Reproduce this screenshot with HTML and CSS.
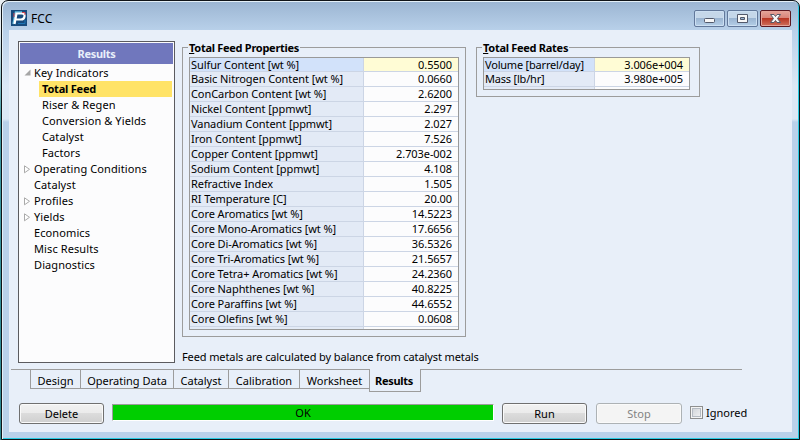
FILE: index.html
```html
<!DOCTYPE html>
<html lang="en">
<head>
<meta charset="utf-8">
<title>FCC</title>
<link rel="stylesheet" href="styles.css">
</head>
<body>
<div class="window">
  <header class="titlebar">
    <svg class="logo" width="16" height="16" viewBox="0 0 16 16">
      <rect width="16" height="16" fill="#164a7c"/>
      <path d="M2 14 4.500 2H11" fill="none" stroke="#65bde0" stroke-width="1.500"/>
      <path d="M3.500 14 5.500 3.500H11Q14 3.500 13.500 6.500T10 9.500H5" fill="none" stroke="#fff" stroke-width="2.200"/>
      <path d="M3 3V7" stroke="#d74750"/><path d="M11 2.500H14V5" fill="none" stroke="#d74750"/>
      <path d="M7 13.500H14V10" fill="none" stroke="#1d75b4"/>
    </svg>
    <span class="title">FCC</span>
    <div class="controls">
      <span class="control"><svg width="29" height="15" viewBox="0 0 29 15"><rect x="9.500" y="7.500" width="10" height="4" rx="1" fill="#f7f7f7" stroke="#52596b"/></svg></span>
      <span class="control"><svg width="29" height="15" viewBox="0 0 29 15"><path d="M9.500 3.500h10v8h-10zM12.500 6.500v2h4v-2z" fill="#f7f7f7" fill-rule="evenodd" stroke="#52596b"/></svg></span>
      <span class="control close"><svg width="29" height="15" viewBox="0 0 29 15"><path d="M9.500 3.500h3.500l1.500 2 1.500-2h3.500l-3 4 3 4h-3.500l-1.500-2-1.500 2H9.500l3-4z" fill="#f7f7f7" stroke="#565a68"/></svg></span>
    </div>
  </header>
  <main class="client">
    <div class="content">
      <nav class="sidebar">
        <h2 class="side-title">Results</h2>
        <ul class="tree">
          <li><svg class="arrow" width="7" height="7" viewBox="0 0 7 7"><path d="M6.500 .5v6h-6z" fill="#a6a6a6"/></svg>Key Indicators</li>
          <li class="child selected">Total Feed</li>
          <li class="child">Riser &amp; Regen</li>
          <li class="child">Conversion &amp; Yields</li>
          <li class="child">Catalyst</li>
          <li class="child">Factors</li>
          <li><svg class="arrow" width="7" height="9" viewBox="0 0 7 9"><path d="M.5.8v7l5-3.500z" fill="#fff" stroke="#aaa"/></svg>Operating Conditions</li>
          <li>Catalyst</li>
          <li><svg class="arrow" width="7" height="9" viewBox="0 0 7 9"><path d="M.5.8v7l5-3.500z" fill="#fff" stroke="#aaa"/></svg>Profiles</li>
          <li><svg class="arrow" width="7" height="9" viewBox="0 0 7 9"><path d="M.5.8v7l5-3.500z" fill="#fff" stroke="#aaa"/></svg>Yields</li>
          <li>Economics</li>
          <li>Misc Results</li>
          <li>Diagnostics</li>
        </ul>
      </nav>
      <div class="panel">
        <div class="groups">
          <section class="group properties">
            <h3 class="legend"><u>T</u>otal Feed Properties</h3>
            <div class="grid">
              <div class="row active"><span>Sulfur Content [wt %]</span><b>0.5500</b></div>
              <div class="row"><span>Basic Nitrogen Content [wt %]</span><b>0.0660</b></div>
              <div class="row"><span>ConCarbon Content [wt %]</span><b>2.6200</b></div>
              <div class="row"><span>Nickel Content [ppmwt]</span><b>2.297</b></div>
              <div class="row"><span>Vanadium Content [ppmwt]</span><b>2.027</b></div>
              <div class="row"><span>Iron Content [ppmwt]</span><b>7.526</b></div>
              <div class="row"><span>Copper Content [ppmwt]</span><b>2.703e-002</b></div>
              <div class="row"><span>Sodium Content [ppmwt]</span><b>4.108</b></div>
              <div class="row"><span>Refractive Index</span><b>1.505</b></div>
              <div class="row"><span>RI Temperature [C]</span><b>20.00</b></div>
              <div class="row"><span>Core Aromatics [wt %]</span><b>14.5223</b></div>
              <div class="row"><span>Core Mono-Aromatics [wt %]</span><b>17.6656</b></div>
              <div class="row"><span>Core Di-Aromatics [wt %]</span><b>36.5326</b></div>
              <div class="row"><span>Core Tri-Aromatics [wt %]</span><b>21.5657</b></div>
              <div class="row"><span>Core Tetra+ Aromatics [wt %]</span><b>24.2360</b></div>
              <div class="row"><span>Core Naphthenes [wt %]</span><b>40.8225</b></div>
              <div class="row"><span>Core Paraffins [wt %]</span><b>44.6552</b></div>
              <div class="row"><span>Core Olefins [wt %]</span><b>0.0608</b></div>
              <div class="row rest"><span></span><b></b></div>
            </div>
          </section>
          <section class="group rates">
            <h3 class="legend"><u>T</u>otal Feed Rates</h3>
            <div class="grid">
              <div class="row active"><span>Volume [barrel/day]</span><b>3.006e+004</b></div>
              <div class="row"><span>Mass [lb/hr]</span><b>3.980e+005</b></div>
              <div class="row rest"><span></span><b></b></div>
            </div>
          </section>
        </div>
        <p class="note">Feed metals are calculated by balance from catalyst metals</p>
      </div>
    </div>
    <div class="tabs">
      <span class="lead"></span>
      <span class="tab design">Design</span>
      <span class="tab operating">Operating Data</span>
      <span class="tab catalyst">Catalyst</span>
      <span class="tab calibration">Calibration</span>
      <span class="tab worksheet">Worksheet</span>
      <span class="tab current">Results</span>
      <span class="trail"></span>
    </div>
    <footer class="actions">
      <button class="button delete">Delete</button>
      <div class="status">OK</div>
      <button class="button run">Run</button>
      <button class="button stop" disabled>Stop</button>
      <span class="check"></span>
      <span class="check-label">Ignored</span>
    </footer>
  </main>
</div>
</body>
</html>
```
FILE: styles.css
```css
* { box-sizing: border-box; }
body {
  margin: 0;
  width: 800px;
  height: 440px;
  overflow: hidden;
  background: linear-gradient(#e8eef2 0 30px, #3d9aa3 120px, #2b8790);
  font: 11px/16px "Noto Sans", "Open Sans", sans-serif;
  letter-spacing: 0.1px;
  color: #000;
}
h2, h3, p, ul { margin: 0; padding: 0; font-size: inherit; }
.window {
  width: 799px;
  height: 440px;
  margin-left: 1px;
  padding: 0 7px 7px 6px;
  border: 1px solid #101418;
  border-radius: 7px 7px 0 0;
  background: linear-gradient(#9bb5d2, #b9d1ea 30px, #dce8f5 85px, #dce8f5 118px, #b9d1ea 121px);
  box-shadow: inset 1px 1px #e4f0f8, inset -1px -1px #28cbe3;
}
.titlebar {
  display: flex;
  align-items: flex-start;
  height: 29px;
  padding: 9px 1px 0 3px;
}
.logo { display: block; }
.title { margin: 1px auto 0 4px; font-size: 12px; line-height: 16px; letter-spacing: 0.1px; }
.controls { display: flex; gap: 2px; }
.control {
  width: 31px;
  height: 17px;
  border: 1px solid #62789a;
  border-radius: 2px;
  background: linear-gradient(#c5d7e9 0 48%, #9bb5d2 50%, #b5cfe7);
  box-shadow: inset 0 0 0 1px #ccdff2;
}
.control svg { display: block; }
.close {
  border-color: #5b1720;
  background: linear-gradient(#e5a49a 0, #d98378 47%, #b93624 50%, #cf705d);
  box-shadow: inset 0 0 0 1px #e4a399;
}
.client {
  height: 402px;
  margin-left: 1px;
  padding-top: 11px;
  background: #e8eff9;
}
.content { display: flex; height: 328px; padding-left: 9px; }
.sidebar {
  width: 157px;
  height: 322px;
  padding: 1px 0;
  border: 1px solid #5b5b5f;
  background: #fcfcfd;
}
.side-title {
  height: 21px;
  margin: 0 1px 0 1px;
  background: #7077bd;
  color: #e8effa;
  letter-spacing: -0.3px;
  line-height: 22px;
  text-align: center;
}
.tree { padding-top: 1px; list-style: none; }
.tree li { position: relative; height: 16px; padding-left: 15px; white-space: nowrap; }
.arrow { position: absolute; left: 5px; top: 4px; }
.tree .child { margin: 0 2px 0 20px; padding-left: 3px; }
.selected { background: #ffe367; font-weight: bold; letter-spacing: -0.2px; }
.panel { margin-left: 7px; }
.groups { display: flex; align-items: flex-start; gap: 10px; padding-top: 6px; }
.group { padding: 0 6px 6px; border: 1px solid #9c9c9c; }
.properties { width: 284px; height: 290px; }
.rates { width: 224px; height: 50px; padding-right: 9px; }
.legend {
  width: max-content;
  height: 16px;
  margin: -8px 0 1px -1px;
  padding: 0 1px;
  background: #e8eff9;
  letter-spacing: -0.28px;
}
.grid { overflow: hidden; border: 1px solid #999; letter-spacing: -0.08px; }
.properties .grid { height: 273px; }
.rates .grid { height: 33px; }
.row { display: flex; height: 15px; line-height: 14px; }
.row span {
  width: 174px;
  padding-left: 1px;
  border-right: 1px solid #ccd5e5;
  border-bottom: 1px solid #ccd5e5;
  background: #e3eaf6;
  white-space: nowrap;
}
.row b {
  flex: 1;
  padding-right: 6px;
  border-bottom: 1px solid #ccd5e5;
  background: #fcfcfd;
  font-weight: normal;
  text-align: right;
}
.rates .row span { width: 111px; letter-spacing: -0.2px; }
.row.active { height: 14px; line-height: 13px; }
.row.active span { background: #d2e2fa; }
.row.active b { background: #fffcd5; }
.row.rest span, .row.rest b { border-bottom: 0; }
.note { margin-top: 12px; letter-spacing: -0.11px; }
.tabs { display: flex; height: 34px; padding-left: 2px; }
.tab {
  height: 20px;
  border: 1px solid #9c9c9c;
  border-right: 0;
  letter-spacing: 0;
  line-height: 22px;
  text-align: center;
  white-space: nowrap;
}
.lead { width: 19px; border-top: 1px solid #9c9c9c; }
.design { width: 50px; }
.operating { width: 93px; }
.catalyst { width: 55px; }
.calibration { width: 71px; }
.worksheet { width: 70px; }
.tab.current {
  width: 52px;
  height: 23px;
  padding-right: 2px;
  border-top: 0;
  border-right: 1px solid #9c9c9c;
  font-weight: bold;
  letter-spacing: -0.3px;
  line-height: 24px;
}
.trail { width: 321px; border-top: 1px solid #9c9c9c; }
.actions { display: flex; align-items: flex-start; padding-left: 10px; }
.button {
  width: 85px;
  height: 21px;
  padding: 0;
  border: 1px solid #707070;
  border-radius: 3px;
  background: linear-gradient(#f2f2f2 0, #ebebeb 47%, #dcdcdc 50%, #cfcfcf);
  box-shadow: inset 0 0 0 1px #fafafa;
  color: #000;
  font: inherit;
  letter-spacing: 0;
}
.status {
  width: 382px;
  height: 17px;
  margin: 1px 8px 0;
  border: 1px solid #9c9c9c;
  border-right-color: #fff;
  border-bottom-color: #fff;
  background: #00ce00;
  text-align: center;
}
.button.stop { width: 86px; margin-left: 9px; border-color: #adb2b5; background: #f4f4f4; color: #838383; }
.check {
  width: 13px;
  height: 13px;
  margin: 3px 3px 0 8px;
  border: 1px solid #8e8f8f;
  background: linear-gradient(135deg, #cbcfd5, #f6f6f6);
  box-shadow: inset 0 0 0 1px #f4f4f4, inset 0 0 0 2px #b5bbc3;
}
.check-label { margin-top: 2px; letter-spacing: 0; }
```
